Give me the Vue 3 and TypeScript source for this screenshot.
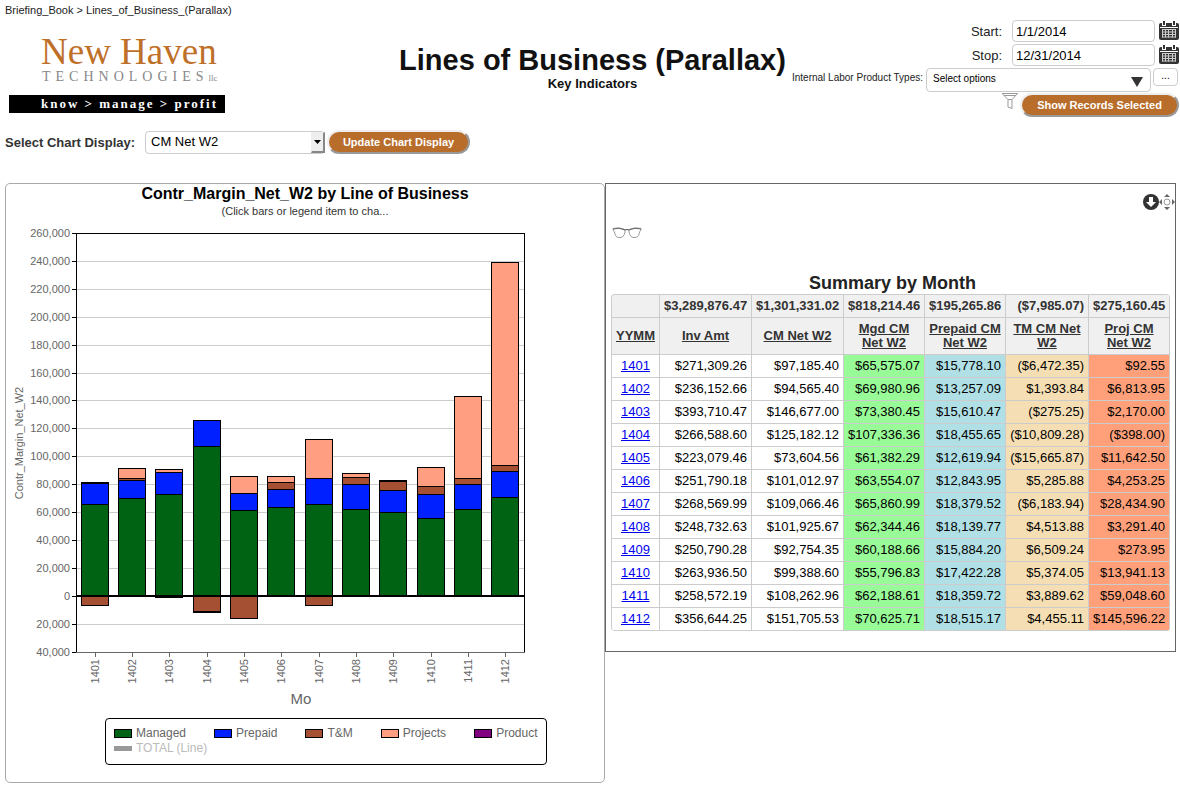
<script setup lang="ts">
import { ref } from 'vue'

interface MonthRow {
  yymm: string
  inv: number
  net: number
  managed: number
  prepaid: number
  tm: number
  projects: number
}

const raw: [string, number, number, number, number, number, number][] = [
  ['1401', 271309.26, 97185.4, 65575.07, 15778.1, -6472.35, 92.55],
  ['1402', 236152.66, 94565.4, 69980.96, 13257.09, 1393.84, 6813.95],
  ['1403', 393710.47, 146677, 73380.45, 15610.47, -275.25, 2170],
  ['1404', 266588.6, 125182.12, 107336.36, 18455.65, -10809.28, -398],
  ['1405', 223079.46, 73604.56, 61382.29, 12619.94, -15665.87, 11642.5],
  ['1406', 251790.18, 101012.97, 63554.07, 12843.95, 5285.88, 4253.25],
  ['1407', 268569.99, 109066.46, 65860.99, 18379.52, -6183.94, 28434.9],
  ['1408', 248732.63, 101925.67, 62344.46, 18139.77, 4513.88, 3291.4],
  ['1409', 250790.28, 92754.35, 60188.66, 15884.2, 6509.24, 273.95],
  ['1410', 263936.5, 99388.6, 55796.83, 17422.28, 5374.05, 13941.13],
  ['1411', 258572.19, 108262.96, 62188.61, 18359.72, 3889.62, 59048.6],
  ['1412', 356644.25, 151705.53, 70625.71, 18515.17, 4455.11, 145596.22],
]

const rows: MonthRow[] = raw.map(([yymm, inv, net, managed, prepaid, tm, projects]) => ({
  yymm, inv, net, managed, prepaid, tm, projects,
}))

function money(v: number): string {
  const s = '$' + Math.abs(v).toLocaleString('en-US', {
    minimumFractionDigits: 2,
    maximumFractionDigits: 2,
  })
  return v < 0 ? `(${s})` : s
}

const columns = [
  { key: 'inv', label: 'Inv Amt', total: 3289876.47 },
  { key: 'net', label: 'CM Net W2', total: 1301331.02 },
  { key: 'managed', label: 'Mgd CM Net W2', total: 818214.46 },
  { key: 'prepaid', label: 'Prepaid CM Net W2', total: 195265.86 },
  { key: 'tm', label: 'TM CM Net W2', total: -7985.07 },
  { key: 'projects', label: 'Proj CM Net W2', total: 275160.45 },
] as const

const series = ['managed', 'prepaid', 'tm', 'projects'] as const

const legend = [
  { name: 'Managed', cls: 'managed' },
  { name: 'Prepaid', cls: 'prepaid' },
  { name: 'T&M', cls: 'tm' },
  { name: 'Projects', cls: 'projects' },
  { name: 'Product', cls: 'product' },
  { name: 'TOTAL (Line)', cls: 'total' },
]

// Plot geometry inside the chart's viewBox
const plot = { left: 70, right: 518, top: 9, bottom: 428 }
const unit = (plot.bottom - plot.top) / 300000
const zeroY = 372
const yOf = (v: number): number => Math.round(zeroY - v * unit)

const ticks = Array.from({ length: 16 }, (_, i) => {
  const v = 260000 - i * 20000
  return { v, y: yOf(v), label: Math.abs(v).toLocaleString('en-US') }
})

const bars = rows.map((row, i) => {
  const x = 75 + Math.floor((i * 112) / 3)
  let up = 0
  let down = 0
  const segments = series.map((key) => {
    const v = row[key]
    const start = v >= 0 ? up : down
    const end = start + v
    if (v >= 0) up = end
    else down = end
    const y = yOf(Math.max(start, end))
    return { key, y, h: Math.max(1, yOf(Math.min(start, end)) - y) }
  })
  return { x, label: row.yymm, segments }
})

const startDate = ref('1/1/2014')
const stopDate = ref('12/31/2014')
const display = ref('CM Net W2')
</script>

<template>
  <div class="page">
    <header class="top">
      <div class="brand">
        <nav class="crumbs" aria-label="Breadcrumb">Briefing_Book &gt; Lines_of_Business_(Parallax)</nav>
        <div class="logo">
          <div class="logo-name">New Haven</div>
          <div class="logo-sub"><span class="logo-tech">TECHNOLOGIES</span><span class="logo-llc">llc</span></div>
          <div class="logo-bar">know &gt; manage &gt; profit</div>
        </div>
      </div>

      <div class="heading">
        <h1>Lines of Business (Parallax)</h1>
        <p>Key Indicators</p>
      </div>

      <form class="filters" @submit.prevent>
        <div class="row">
          <label for="start">Start:</label>
          <input id="start" v-model="startDate" type="text" class="date" />
          <button type="button" class="icon cal" aria-label="Pick start date">
            <svg viewBox="0 0 20 20" width="20" height="20">
              <path class="dark" d="M0 4Q0 2 2 2H18Q20 2 20 4V17Q20 19 18 19H2Q0 19 0 17Z" />
              <path class="light" d="M3 1H7V5H3ZM13 1H17V5H13ZM1 6H19V7H1Z" />
              <path class="dark" d="M4 0H6V4H4ZM14 0H16V4H14Z" />
              <path class="rule" d="M3 8.500H17M3 11H17M3 13.500H17M3 16H17M3.500 8V16.500M6.500 8V16.500M9.500 8V16.500M13.500 8V16.500M16.500 8V16.500" />
            </svg>
          </button>
        </div>
        <div class="row">
          <label for="stop">Stop:</label>
          <input id="stop" v-model="stopDate" type="text" class="date" />
          <button type="button" class="icon cal" aria-label="Pick stop date">
            <svg viewBox="0 0 20 20" width="20" height="20">
              <path class="dark" d="M0 4Q0 2 2 2H18Q20 2 20 4V17Q20 19 18 19H2Q0 19 0 17Z" />
              <path class="light" d="M3 1H7V5H3ZM13 1H17V5H13ZM1 6H19V7H1Z" />
              <path class="dark" d="M4 0H6V4H4ZM14 0H16V4H14Z" />
              <path class="rule" d="M3 8.500H17M3 11H17M3 13.500H17M3 16H17M3.500 8V16.500M6.500 8V16.500M9.500 8V16.500M13.500 8V16.500M16.500 8V16.500" />
            </svg>
          </button>
        </div>
        <div class="row types">
          <label for="types">Internal Labor Product Types:</label>
          <div class="pick">
            <select id="types"><option>Select options</option></select>
            <svg class="caret" viewBox="0 0 12 10" width="12" height="10"><path d="M0 0H12L6 10Z" /></svg>
          </div>
          <button type="button" class="more">...</button>
        </div>
        <div class="row submit">
          <svg class="funnel" viewBox="0 0 16 16" width="16" height="16">
            <path d="M0 .500H15.500L10 6.500V15.500L6 14V6.500Z M2 2.500H14M6 6.500H10" />
          </svg>
          <button type="submit" class="action wide">Show Records Selected</button>
        </div>
      </form>
    </header>

    <form class="display" @submit.prevent>
      <label for="display">Select Chart Display:</label>
      <div class="combo">
        <select id="display" v-model="display"><option>CM Net W2</option></select>
        <span class="combo-btn"><svg viewBox="0 0 7 4" width="7" height="4"><path d="M0 0H7L3.500 4Z" /></svg></span>
      </div>
      <button type="submit" class="action">Update Chart Display</button>
    </form>

    <main class="panels">
      <section class="chart">
        <h2>Contr_Margin_Net_W2 by Line of Business</h2>
        <p class="hint">(Click bars or legend item to cha...</p>
        <svg class="plot" viewBox="0 0 598 490" role="img" aria-label="Contribution margin by month">
          <g v-for="t in ticks" :key="t.v">
            <rect class="grid" :x="plot.left" :y="t.y" :width="plot.right - plot.left" height="1" />
            <rect :x="plot.left - 4" :y="t.y" width="5" height="1" />
            <text class="tick" :x="64" :y="t.y + 4" text-anchor="end">{{ t.label }}</text>
          </g>
          <rect :x="plot.left" :y="plot.top" :width="plot.right - plot.left + 1" height="1" />
          <rect :x="plot.left" :y="plot.top" width="1" :height="plot.bottom - plot.top" />
          <rect :x="plot.right" :y="plot.top" width="1" :height="plot.bottom - plot.top" />
          <rect class="base" :x="plot.left" :y="plot.bottom" :width="plot.right - plot.left + 1" height="1" />
          <g v-for="b in bars" :key="b.label">
            <rect
              v-for="s in b.segments"
              :key="s.key"
              class="seg"
              :class="s.key"
              :x="b.x + 0.5"
              :y="s.y + 0.5"
              width="27"
              :height="s.h"
            />
            <rect class="base" :x="b.x + 14" :y="plot.bottom" width="1" height="5" />
            <text class="tick" :transform="`translate(${b.x + 18} 435) rotate(-90)`" text-anchor="end">{{ b.label }}</text>
          </g>
          <rect :x="plot.left" :y="zeroY - 1" :width="plot.right - plot.left" height="2" />
          <text class="axis-x" x="295" y="480" text-anchor="middle">Mo</text>
          <text class="tick" transform="translate(17 219) rotate(-90)" text-anchor="middle">Contr_Margin_Net_W2</text>
        </svg>
        <ul class="legend">
          <li v-for="l in legend" :key="l.name" :class="{ off: l.cls === 'total' }">
            <span class="swatch" :class="l.cls"></span>{{ l.name }}
          </li>
        </ul>
      </section>

      <section class="summary">
        <div class="tools">
          <button type="button" class="icon" aria-label="Collapse">
            <svg viewBox="0 0 16 16" width="16" height="16">
              <circle cx="8" cy="8" r="8" fill="#333" />
              <path fill="#fff" d="M6 3H10V8H13L8 13L3 8H6Z" />
            </svg>
          </button>
          <button type="button" class="icon" aria-label="Move">
            <svg viewBox="0 0 16 16" width="16" height="16">
              <circle cx="8" cy="8" r="3" fill="none" stroke="#999" />
              <path fill="#666" d="M8 0L11 3H5ZM8 16L5 13H11ZM0 8L3 5V11ZM16 8L13 5V11Z" />
            </svg>
          </button>
        </div>
        <button type="button" class="icon glasses" aria-label="View">
          <svg viewBox="0 0 30 12" width="30" height="12">
            <path d="M1 1.500Q6 0 12 2Q13.500 2.500 13 5Q12 10.500 8 10.500Q4 11 3 7Q2.500 4 1 3ZM29 1.500Q24 0 18 2Q16.500 2.500 17 5Q18 10.500 22 10.500Q26 11 27 7Q27.500 4 29 3ZM13 3Q15 1.500 17 3" />
            <path class="brow" d="M1 2Q7 0 13 3Q15 2 17 3Q23 0 29 2" />
          </svg>
        </button>
        <h2>Summary by Month</h2>
        <table>
          <colgroup>
            <col class="c-month" /><col class="c-wide" /><col class="c-wide" />
            <col class="c-mid" /><col class="c-mid" /><col class="c-tm" /><col class="c-proj" />
          </colgroup>
          <thead>
            <tr class="totals">
              <td></td>
              <td v-for="c in columns" :key="c.key">{{ money(c.total) }}</td>
            </tr>
            <tr class="heads">
              <th scope="col"><span>YYMM</span></th>
              <th v-for="c in columns" :key="c.key" scope="col"><span>{{ c.label }}</span></th>
            </tr>
          </thead>
          <tbody>
            <tr v-for="r in rows" :key="r.yymm">
              <td class="month"><a :href="'#' + r.yymm">{{ r.yymm }}</a></td>
              <td v-for="c in columns" :key="c.key" :class="'v-' + c.key">{{ money(r[c.key]) }}</td>
            </tr>
          </tbody>
        </table>
      </section>
    </main>
  </div>
</template>

<style>
body {
  margin: 0;
  background: #fff;
}
</style>

<style scoped>
.page {
  box-sizing: border-box;
  padding: 0 4px 6px 5px;
  font-family: "Liberation Sans", Arial, Helvetica, sans-serif;
  font-size: 13px;
  color: #222;
}
h1, h2, p, ul {
  margin: 0;
  padding: 0;
}
button, input, select {
  font-family: inherit;
  box-sizing: border-box;
  margin: 0;
}
.top {
  display: grid;
  grid-template-columns: minmax(0, 1fr) auto minmax(0, 1fr);
  height: 118px;
  margin-right: -4px;
}
.crumbs {
  font-size: 11px;
  line-height: 14px;
  padding-top: 3px;
  white-space: nowrap;
}
.logo {
  width: 216px;
  margin: 15px 0 0 4px;
  font-family: "Liberation Serif", "Times New Roman", serif;
}
.logo-name {
  padding-left: 32px;
  font-size: 37px;
  line-height: 40px;
  color: #bf7028;
  white-space: nowrap;
}
.logo-sub {
  display: flex;
  align-items: baseline;
  padding-left: 33px;
  line-height: 10px;
  color: #888;
}
.logo-tech {
  font-size: 14px;
  letter-spacing: 5px;
}
.logo-llc {
  font-size: 9px;
}
.logo-bar {
  margin-top: 12px;
  padding-left: 32px;
  background: #000;
  color: #fff;
  font-size: 13px;
  font-weight: bold;
  line-height: 18px;
  letter-spacing: 2px;
  white-space: nowrap;
}
.heading {
  padding-top: 44px;
  text-align: center;
  color: #111;
}
h1 {
  font-size: 29px;
  line-height: 32px;
}
.heading p {
  font-weight: bold;
  line-height: 16px;
}
.filters {
  display: flex;
  flex-direction: column;
  align-items: flex-end;
  gap: 2px;
  padding: 20px 1px 0 0;
}
.row {
  display: flex;
  align-items: center;
}
.date {
  width: 143px;
  height: 22px;
  margin: 0 4px 0 10px;
  padding: 0 3px;
  border: 1px solid #ccc;
  border-radius: 4px;
  font-size: 13px;
  color: #000;
}
.icon {
  display: block;
  padding: 0;
  border: 0;
  background: none;
  line-height: 0;
}
.dark {
  fill: #333;
}
.light {
  fill: #fff;
}
.rule {
  fill: none;
  stroke: #ccc;
}
.types {
  align-items: flex-start;
  padding-right: 1px;
}
.types label {
  font-size: 10px;
  line-height: 20px;
  white-space: nowrap;
}
.pick, .combo {
  position: relative;
}
.pick {
  margin: 0 2px 0 3px;
}
select {
  appearance: none;
  display: block;
  border: 1px solid #ccc;
  border-radius: 4px;
  background: #fff;
  color: #000;
}
.pick select {
  width: 225px;
  height: 24px;
  padding: 0 20px 4px 6px;
  font-size: 10px;
}
.caret {
  position: absolute;
  right: 8px;
  top: 9px;
  fill: #333;
  pointer-events: none;
}
.more {
  width: 25px;
  height: 18px;
  padding: 0 0 2px;
  border: 1px solid #ccc;
  border-radius: 4px;
  background: #fff;
  font-size: 10px;
  line-height: 12px;
  color: #000;
}
.submit {
  align-items: flex-start;
  margin-top: -1px;
}
.funnel {
  margin-right: 2px;
  fill: none;
  stroke: #999;
}
.action {
  width: 143px;
  height: 24px;
  padding: 0;
  border: 2px solid;
  border-color: #eee #999 #999 #eee;
  border-radius: 12px;
  background: #b96d2b;
  color: #fff;
  font-size: 11px;
  font-weight: bold;
  line-height: 16px;
  white-space: nowrap;
}
.action.wide {
  width: 159px;
}
.display {
  display: flex;
  align-items: center;
  margin: 12px 0 29px;
}
.display label {
  width: 140px;
  font-weight: bold;
  color: #333;
}
.combo {
  margin-right: 2px;
}
.combo select {
  width: 180px;
  height: 23px;
  padding: 0 18px 2px 5px;
  font-size: 13px;
}
.combo-btn {
  position: absolute;
  right: 0;
  top: 1px;
  bottom: 1px;
  width: 14px;
  box-sizing: border-box;
  display: flex;
  align-items: center;
  justify-content: center;
  border: 1px solid;
  border-width: 1px 2px 2px 1px;
  border-color: #eee #888 #888 #eee;
  background: #eee;
  pointer-events: none;
}
.panels {
  display: grid;
  grid-template-columns: 600fr 571fr;
  align-items: start;
}
.chart {
  box-sizing: border-box;
  min-height: 600px;
  border: 1px solid #aaa;
  border-radius: 5px;
}
.chart h2 {
  font-size: 16px;
  line-height: 20px;
  text-align: center;
  color: #000;
}
.hint {
  font-size: 11px;
  line-height: 14px;
  text-align: center;
  color: #333;
}
.plot {
  display: block;
  width: 100%;
  margin-top: 6px;
}
.grid {
  fill: #ccc;
}
.base {
  fill: #666;
}
.seg {
  stroke: #000;
}
.tick {
  font-size: 11px;
  fill: #666;
}
.axis-x {
  font-size: 15px;
  fill: #666;
}
.managed {
  fill: #006314;
  background: #006314;
}
.prepaid {
  fill: #0020ff;
  background: #0020ff;
}
.tm {
  fill: #a55032;
  background: #a55032;
}
.projects {
  fill: #ff9e80;
  background: #ff9e80;
}
.product {
  background: #800080;
}
.legend {
  box-sizing: border-box;
  display: flex;
  flex-wrap: wrap;
  column-gap: 28px;
  max-width: 442px;
  margin: 4px 0 0 99px;
  padding: 7px 8px 8px;
  border: 1px solid #000;
  border-radius: 4px;
  list-style: none;
  font-size: 12px;
  line-height: 15px;
  color: #666;
}
.legend li {
  display: flex;
  align-items: center;
  gap: 4px;
}
.legend .off {
  color: #bbb;
}
.swatch {
  box-sizing: border-box;
  width: 18px;
  height: 9px;
  border: 1px solid #000;
}
.swatch.total {
  height: 5px;
  border: 0;
  background: #999;
}
.summary {
  box-sizing: border-box;
  border: 1px solid #666;
  padding: 10px 5px 20px;
}
.tools {
  display: flex;
  justify-content: flex-end;
  margin-right: -5px;
}
.glasses {
  margin: 17px 0 0 1px;
}
.glasses path {
  fill: none;
  stroke: #999;
}
.glasses .brow {
  stroke: #666;
}
.summary h2 {
  margin-top: 33px;
  padding-left: 4px;
  font-size: 18px;
  line-height: 22px;
  text-align: center;
}
table {
  width: 100%;
  table-layout: fixed;
  border-collapse: separate;
  border-spacing: 0;
  border: 1px solid #ccc;
  border-width: 1px 0 0 1px;
  border-radius: 4px;
  overflow: hidden;
  color: #000;
}
.c-month {
  width: 48px;
}
.c-wide {
  width: 92px;
}
.c-mid {
  width: 81px;
}
.c-tm {
  width: 83px;
}
.c-proj {
  width: 81px;
}
td, th {
  box-sizing: border-box;
  height: 23px;
  padding: 0 4px;
  border: 1px solid #ccc;
  border-width: 0 1px 1px 0;
  line-height: 14px;
  text-align: right;
}
.totals td, .heads th {
  background: #f0f0f0;
  font-weight: bold;
  color: #333;
}
.heads th {
  height: 37px;
  text-align: center;
  text-decoration: underline;
}
.month {
  text-align: center;
}
.month a {
  color: #0000ee;
}
.v-managed {
  background: #98fb98;
}
.v-prepaid {
  background: #b0e0e6;
}
.v-tm {
  background: #f5deb3;
}
.v-projects {
  background: #ffa07a;
}
</style>
